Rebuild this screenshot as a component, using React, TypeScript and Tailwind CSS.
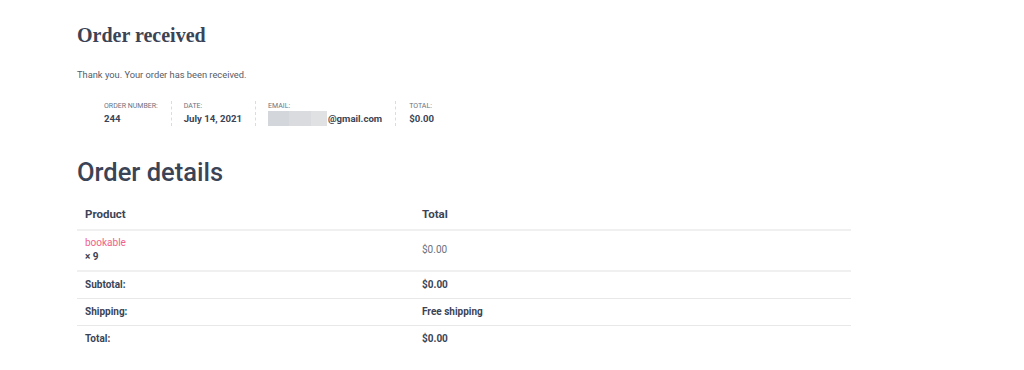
import React from "react";

interface OverviewItem {
  label: string;
  value: React.ReactNode;
}

const overview: OverviewItem[] = [
  { label: "Order number:", value: "244" },
  { label: "Date:", value: "July 14, 2021" },
  {
    label: "Email:",
    value: (
      <span className="flex items-center">
        {/* redacted part of the address */}
        <span className="flex h-[15px]">
          <span className="w-[21px] bg-[#d3d6da]" />
          <span className="w-[22px] bg-[#d9dbde]" />
          <span className="w-[16px] bg-[#dfe1e3]" />
        </span>
        <span className="ml-[1px]">@gmail.com</span>
      </span>
    ),
  },
  { label: "Total:", value: "$0.00" },
];

const footRows = [
  { label: "Subtotal:", value: "$0.00" },
  { label: "Shipping:", value: "Free shipping" },
  { label: "Total:", value: "$0.00" },
];

export default function App() {
  return (
    <div className="h-[370px] w-[1024px] bg-white font-['Roboto','Liberation_Sans',sans-serif] text-[#3b4456]">
      <div className="w-[851px] pl-[77px] pt-[23px]">
        <h2 className="font-['Roboto_Slab','Liberation_Serif',serif] text-[20px] font-bold leading-[24px] text-[#3b4456]">
          Order received
        </h2>
        <p className="mt-[21px] text-[9.3px] leading-[14px] text-[#555b66]">
          Thank you. Your order has been received.
        </p>

        <ul className="ml-[27px] mt-[19px] flex">
          {overview.map((item, i) => (
            <li
              key={item.label}
              className={`flex flex-col pr-[13px] ${
                i === 0 ? "" : i === overview.length - 1 ? "pl-[13px]" : "pl-[12px]"
              } ${
                i < overview.length - 1
                  ? "border-r border-dashed border-[#dcdcdc]"
                  : ""
              }`}
            >
              <span className="text-[7px] uppercase leading-[10px] text-[#6b7280]">
                {item.label}
              </span>
              <span className="text-[9.6px] font-bold leading-[15px] text-[#3b4456]">
                {item.value}
              </span>
            </li>
          ))}
        </ul>

        <h2 className="mt-[30px] text-[25.5px] font-medium leading-[32px] text-[#3b4456]">
          Order details
        </h2>

        <table className="mt-[12px] w-full border-collapse text-left">
          <thead>
            <tr className="border-b-2 border-[#f0f0f0]">
              <th className="w-[337px] px-[8px] py-[7px] text-[11.5px] font-bold leading-[15px]">
                Product
              </th>
              <th className="px-[8px] py-[7px] text-[11.5px] font-bold leading-[15px]">
                Total
              </th>
            </tr>
          </thead>
          <tbody>
            <tr className="border-b-2 border-[#f0f0f0]">
              <td className="px-[8px] pb-[6px] pt-[5px]">
                <div className="text-[10px] leading-[14px] text-[#f0628a]">
                  bookable
                </div>
                <div className="text-[10px] font-bold leading-[14px]">
                  × 9
                </div>
              </td>
              <td className="px-[8px] pb-[6px] pt-[5px] text-[10px] leading-[14px] text-[#6b7280]">
                $0.00
              </td>
            </tr>
          </tbody>
          <tfoot>
            {footRows.map((row, i) => (
              <tr
                key={row.label}
                className={
                  i < footRows.length - 1 ? "border-b border-[#e8e8e8]" : ""
                }
              >
                <th className="px-[8px] py-[6px] text-[10px] font-bold leading-[14px]">
                  {row.label}
                </th>
                <td className="px-[8px] py-[6px] text-[10px] font-bold leading-[14px]">
                  {row.value}
                </td>
              </tr>
            ))}
          </tfoot>
        </table>
      </div>
    </div>
  );
}
